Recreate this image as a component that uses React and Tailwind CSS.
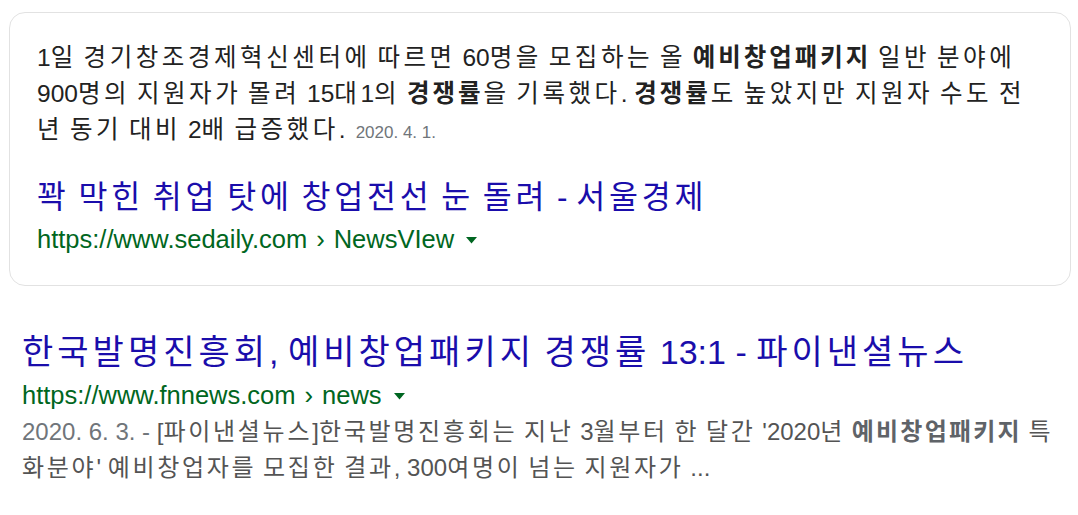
import React from "react";

const font = { fontFamily: '"Liberation Sans", Arial, "Noto Sans CJK KR", sans-serif' };

// Hangul in Noto is narrower than the original Malgun Gothic, so widen only the Hangul runs
function k(text, wide = "tracking-[0.145em]") {
  return text.split(/([\uAC00-\uD7A3]+)/).map((part, i) =>
    /[\uAC00-\uD7A3]/.test(part)
      ? <span key={i} className={wide}>{part}</span>
      : part
  );
}

function Caret() {
  return (
    <svg width="11" height="7" viewBox="0 0 11 7" className="ml-[12px] mt-[2px]">
      <path d="M0 0 L11 0 L5.5 6.5 Z" fill="#006621" />
    </svg>
  );
}

function Breadcrumb({ host, path, className }) {
  return (
    <div className={"flex items-center h-[36px] text-[25.5px] text-[#006621] whitespace-nowrap " + className}>
      <span>{host}</span>
      <span className="mx-[9px]">›</span>
      <span>{path}</span>
      <Caret />
    </div>
  );
}

export default function App() {
  return (
    <div className="bg-white w-[1078px] h-[515px] overflow-hidden pt-[12px] pl-[9px] pr-[7px]" style={font}>
      {/* featured snippet card */}
      <div className="border border-[#e2e2e2] rounded-[16px] pt-[27px] pb-[28px] pl-[27px] pr-[20px]">
        <div className="text-[24.5px] leading-[36px] text-[#222222] whitespace-nowrap">
          {k("1일 경기창조경제혁신센터에 따르면 60명을 모집하는 올 ")}<b>{k("예비창업패키지", "tracking-[0.12em]")}</b>{k(" 일반 분야에")}
          <br />
          {k("900명의 지원자가 몰려 15대1의 ")}<b>{k("경쟁률", "tracking-[0.12em]")}</b>{k("을 기록했다. ")}<b>{k("경쟁률", "tracking-[0.12em]")}</b>{k("도 높았지만 지원자 수도 전")}
          <br />
          {k("년 동기 대비 2배 급증했다.")}
          <span className="ml-[10px] text-[17px] text-[#70757a]">2020. 4. 1.</span>
        </div>
        <div className="mt-[24px] text-[31.5px] leading-[44px] text-[#1a0dab] whitespace-nowrap">
          {k("꽉 막힌 취업 탓에 창업전선 눈 돌려 - 서울경제", "tracking-[0.12em]")}
        </div>
        <Breadcrumb host="https://www.sedaily.com" path="NewsVIew" className="mt-[2px]" />
      </div>

      {/* regular result */}
      <div className="pl-[13px] pt-[44px]">
        <div className="text-[34px] leading-[44px] text-[#1a0dab] whitespace-nowrap">
          {k("한국발명진흥회, 예비창업패키지 경쟁률 13:1 - 파이낸셜뉴스", "tracking-[0.118em]")}
        </div>
        <Breadcrumb host="https://www.fnnews.com" path="news" className="mt-[3px]" />
        <div className="text-[24px] leading-[36px] text-[#545454] mt-[1px] whitespace-nowrap">
          <span className="text-[#70757a]">2020. 6. 3. - </span>
          {k("[파이낸셜뉴스]한국발명진흥회는 지난 3월부터 한 달간 '2020년 ", "tracking-[0.113em]")}
          <b className="text-[#5f6368]">{k("예비창업패키지", "tracking-[0.093em]")}</b>{k(" 특", "tracking-[0.113em]")}
          <br />
          {k("화분야' 예비창업자를 모집한 결과, 300여명이 넘는 지원자가 ...", "tracking-[0.113em]")}
        </div>
      </div>
    </div>
  );
}
